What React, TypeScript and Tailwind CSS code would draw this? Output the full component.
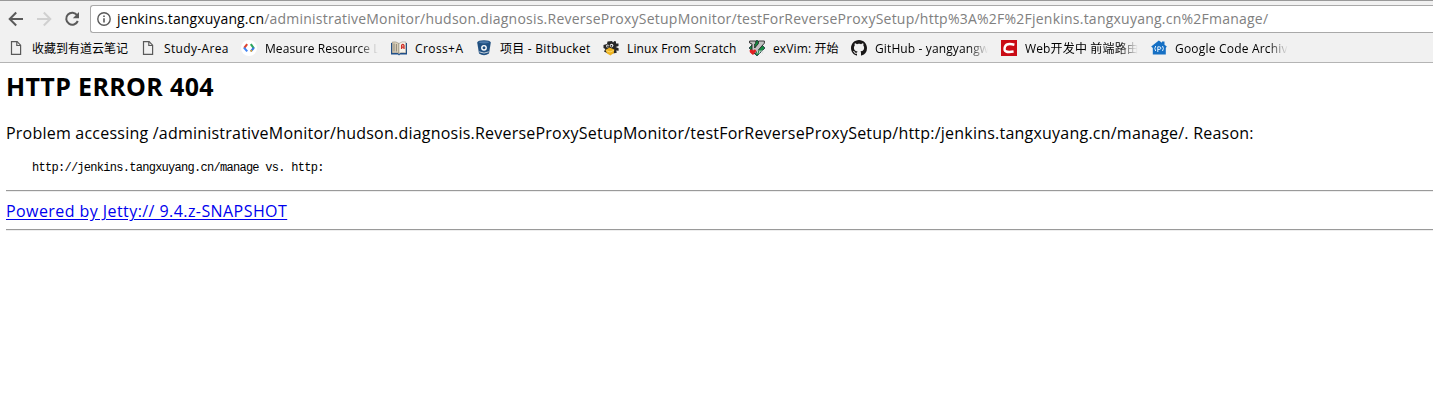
import React from 'react';

type Bookmark = { label: string; width: string; tracking: string; fade?: boolean; icon: React.ReactNode };

const DocIcon = () => (
  <svg width="16" height="16" viewBox="0 0 16 16" fill="none" stroke="#5a5a5a" strokeWidth="1.2">
    <path d="M3.5 1.6h5.6l3.5 3.6v9.2H3.5z" />
    <path d="M8.8 1.6v3.9h3.8" />
  </svg>
);

const CodeIcon = () => (
  <svg width="16" height="16" viewBox="0 0 16 16" fill="none" strokeWidth="2.1">
    <circle cx="8" cy="8" r="8" fill="#fff" />
    <path d="M6.2 4.2 3.2 8" stroke="#e0442f" />
    <path d="M3 7.6 6.2 11.4" stroke="#4285f4" />
    <path d="M9.8 4.2 12.9 8.3" stroke="#2da55d" />
    <path d="M12.9 7.8 9.8 11.4" stroke="#3b78e0" />
    <path d="M9.6 11.6 10.8 10.2" stroke="#f4a81d" strokeWidth="1.6" />
  </svg>
);

const BookIcon = () => (
  <svg width="16" height="16" viewBox="0 0 16 16">
    <path d="M0 3h1.5v10h5.5l1 1 1-1h5.5V3H16v11.5H9l-1 1-1-1H0z" fill="#1c4f8c" />
    <path d="M1.2 2Q5 1 8 3.5V13.4Q5 11.6 1.2 13z" fill="#d9cfb9" stroke="#6d6558" strokeWidth=".4" />
    <path d="M14.8 2Q11 1 8 3.5V13.4q3-1.8 6.8-.4z" fill="#f6f3ea" stroke="#6d6558" strokeWidth=".4" />
    <path d="M3 3.5v8M5.4 4v7.5" stroke="#8e8779" />
    <path d="M10.6 9V5.4q1.2-2 2.4 0V9M10.6 7.2H13" stroke="#cf3028" strokeWidth="1.3" fill="none" />
  </svg>
);

const BitbucketIcon = () => (
  <svg width="16" height="16" viewBox="0 0 16 16">
    <path d="M1.2 2.5 3 13.6Q8 17 13 13.6l1.8-11.1Q14 .2 8 .2T1.2 2.5z" fill="#205081" />
    <ellipse cx="8" cy="2.3" rx="5" ry="1.1" fill="#4b78a8" />
    <circle cx="8" cy="7.8" r="2.2" fill="#205081" stroke="#fff" strokeWidth="1.4" />
    <path d="M3.2 11.8Q8 14.4 12.8 11.8" stroke="#f1f1f1" strokeWidth=".8" fill="none" />
  </svg>
);

const TuxIcon = () => (
  <svg width="16" height="16" viewBox="0 0 16 16">
    <path d="M.5 5 4 4l.5-2.5L9 1l1 1.6L11.5 1 13 1.6V3.5l2.5 0V6L12.6 7l3 1.2v2.6l-2.4-.4.6 2.4-2.6.4L4 13 1 11.6 2.4 9 .5 8z" fill="#262626" />
    <circle cx="4.6" cy="6" r="1.6" fill="#d9d9d9" />
    <circle cx="8.6" cy="5.6" r="1.8" fill="#e8e8e8" />
    <circle cx="5" cy="6.2" r=".8" fill="#111" />
    <circle cx="8.4" cy="5.9" r=".8" fill="#111" />
    <path d="M2.4 10 6.5 7.6l4.8 2L10.8 13 7.4 15.4 4 13.6z" fill="#eeb320" />
    <path d="M3.2 10.6 7 12l3.8-1.6" stroke="#fbe07a" fill="none" strokeWidth=".9" />
  </svg>
);

const VimIcon = () => (
  <svg width="16" height="16" viewBox="0 0 16 16">
    <path d="M8 0l8 8-8 8-8-8z" fill="#168a42" stroke="#123" strokeWidth=".7" />
    <path d="M.6 1h6.2v2L5.7 4v4L9.4 3.6V1h6v2.2L6.2 13.6H3V4L.6 3z" fill="#c2c2c2" stroke="#151515" strokeWidth=".8" />
    <path d="M.5 10.5q2-2.2 3.6 0 1.8-2 3.2.4L4 15 1 12.6z" fill="#e22020" />
    <path d="M8 13.6l1-3.6m1 3.6 1-3 1 1 1-1 1 1-1 2" stroke="#ddd" fill="none" />
  </svg>
);

const GithubIcon = () => (
  <svg width="16" height="16" viewBox="0 0 16 16" fill="#191717">
    <path d="M8 0C3.58 0 0 3.58 0 8c0 3.54 2.29 6.53 5.47 7.59.4.07.55-.17.55-.38 0-.19-.01-.82-.01-1.49-2.01.37-2.53-.49-2.69-.94-.09-.23-.48-.94-.82-1.13-.28-.15-.68-.52-.01-.53.63-.01 1.08.58 1.23.82.72 1.21 1.87.87 2.33.66.07-.52.28-.87.51-1.07-1.78-.2-3.64-.89-3.64-3.95 0-.87.31-1.59.82-2.15-.08-.2-.36-1.02.08-2.12 0 0 .67-.21 2.2.82.64-.18 1.32-.27 2-.27s1.36.09 2 .27c1.53-1.04 2.2-.82 2.2-.82.44 1.1.16 1.92.08 2.12.51.56.82 1.27.82 2.15 0 3.07-1.87 3.75-3.65 3.95.29.25.54.73.54 1.48 0 1.07-.01 1.93-.01 2.2 0 .21.15.46.55.38A8 8 0 0 0 16 8c0-4.42-3.58-8-8-8z" />
  </svg>
);

const CsdnIcon = () => (
  <svg width="16" height="16" viewBox="0 0 16 16">
    <path d="M0 0h16v16H0z" fill="#ca0c16" />
    <path d="M13.4 4.7Q5.4 2.8 4 6.7T5.2 11.5q2 .9 7.4.1" fill="none" stroke="#fff" strokeWidth="2.5" />
  </svg>
);

const HouseIcon = () => (
  <svg width="16" height="16" viewBox="0 0 16 16">
    <path d="M.2 6.6 7.8.5 11 2.8V1.5h2.5v3.2l2.3 1.9-1 1.4V14.5H1.8V8z" fill="#1670c4" />
    <path d="M4.7 6q-1.8 2.5 0 5M11.5 6q1.8 2.5 0 5M6.8 12V6.8h1.3q1.8 0 1.8 1.3T8.1 9.5H6.8" fill="none" stroke="#e4f2ff" strokeWidth="1" />
  </svg>
);

const bookmarks: Bookmark[] = [
  { label: '收藏到有道云笔记', width: 'w-[132px]', tracking: 'tracking-[0px]', icon: <DocIcon /> },
  { label: 'Study-Area', width: 'w-[101px]', tracking: 'tracking-[0.35px]', icon: <DocIcon /> },
  { label: 'Measure Resource L', width: 'w-[150px]', tracking: 'tracking-[0.08px]', fade: true, icon: <CodeIcon /> },
  { label: 'Cross+A', width: 'w-[85px]', tracking: 'tracking-[0.4px]', icon: <BookIcon /> },
  { label: '项目 - Bitbucket', width: 'w-[127px]', tracking: 'tracking-[0.25px]', icon: <BitbucketIcon /> },
  { label: 'Linux From Scratch', width: 'w-[146px]', tracking: 'tracking-[0.12px]', icon: <TuxIcon /> },
  { label: 'exVim: 开始', width: 'w-[102px]', tracking: 'tracking-[0.12px]', icon: <VimIcon /> },
  { label: 'GitHub - yangyangw', width: 'w-[150px]', tracking: 'tracking-[0.12px]', fade: true, icon: <GithubIcon /> },
  { label: 'Web开发中 前端路由', width: 'w-[150px]', tracking: 'tracking-[0.15px]', fade: true, icon: <CsdnIcon /> },
  { label: 'Google Code Archiv', width: 'w-[150px]', tracking: 'tracking-[0.2px]', fade: true, icon: <HouseIcon /> },
];

const Toolbar = () => (
  <div className="flex h-[28px] items-center">
    <div className="flex w-[90px] shrink-0 items-center gap-3 pl-2">
      <svg width="16" height="16" viewBox="0 0 16 16" fill="none" stroke="#5a5a5a" strokeWidth="2">
        <path d="M15 8H2.5M8.2 1.5 1.7 8l6.5 6.5" />
      </svg>
      <svg width="16" height="16" viewBox="0 0 16 16" fill="none" stroke="#d0d0d0" strokeWidth="2">
        <path d="M1 8h12.5M7.8 1.5 14.3 8l-6.5 6.5" />
      </svg>
      <svg width="16" height="16" viewBox="0 0 16 16" fill="none" stroke="#5a5a5a" strokeWidth="2">
        <path d="M13.2 4.3A6 6 0 1 0 13.8 10" />
        <path d="M15 1v6.2H8.8z" fill="#5a5a5a" stroke="none" />
      </svg>
    </div>
    <div className="flex h-[28px] flex-1 items-center rounded-l-[3px] border border-r-0 border-[#a9a9a9] bg-white pl-[6px]">
      <svg className="shrink-0" width="14" height="14" viewBox="0 0 14 14" fill="none" stroke="#5a5a5a">
        <circle cx="7" cy="7" r="6.2" strokeWidth="1.4" />
        <path d="M7 6.2v4.3M7 3.4v1.6" strokeWidth="1.6" />
      </svg>
      <div className="ml-[6px] flex whitespace-pre text-[14px] leading-[20px]">
        <span className="tracking-[0.12px] text-black">jenkins.tangxuyang.cn</span>
        <span className="tracking-[0.23px] text-[#808080]">/administrativeMonitor/hudson.diagnosis.ReverseProxySetupMonitor/testForReverseProxySetup/http%3A%2F%2Fjenkins.tangxuyang.cn%2Fmanage/</span>
      </div>
    </div>
  </div>
);

const BookmarkBar = () => (
  <div className="flex h-[30px] items-center pl-2 text-[12px] leading-[18px] text-black">
    {bookmarks.map((b) => (
      <div key={b.label} className={`flex shrink-0 items-center gap-2 ${b.width}`}>
        <span className="w-4 shrink-0">{b.icon}</span>
        <span
          className={`shrink-0 pt-[2px] whitespace-pre ${b.tracking} ${b.fade ? 'w-[114px] [mask-image:linear-gradient(to_right,black_82%,transparent_99%)]' : ''}`}
        >
          {b.label}
        </span>
      </div>
    ))}
  </div>
);

export default function App() {
  return (
    <div className="h-[400px] w-full overflow-hidden bg-white font-['Open_Sans','Noto_Sans_CJK_SC',sans-serif]">
      <header className="h-[63px] border-t border-b border-t-[#999] border-b-[#b4b4b4] bg-[#f1f1f1] pt-1">
        <Toolbar />
        <BookmarkBar />
      </header>
      <main className="pl-[6px] text-black">
        <h2 className="pt-[6px] text-[25px] leading-[34px] font-bold tracking-[0.35px]">HTTP ERROR 404</h2>
        <p className="pt-[19px] text-[16px] leading-[22px] tracking-[0.222px] whitespace-pre">Problem accessing /administrativeMonitor/hudson.diagnosis.ReverseProxySetupMonitor/testForReverseProxySetup/http:/jenkins.tangxuyang.cn/manage/. Reason:</p>
        <pre className="pt-[16px] pl-[26px] font-['Liberation_Mono',monospace] text-[12px] leading-[16px] tracking-[-0.72px]">http://jenkins.tangxuyang.cn/manage vs. http:</pre>
        <hr className="mt-[14px] h-[2px] border-t border-b border-t-[#9a9a9a] border-b-[#eee]" />
        <div className="mt-[8px] text-[16px] leading-[22px]">
          <a className="tracking-[0.43px] text-[#0000ee] underline underline-offset-2">Powered by Jetty:// 9.4.z-SNAPSHOT</a>
        </div>
        <hr className="mt-[7px] h-[2px] border-t border-b border-t-[#9a9a9a] border-b-[#eee]" />
      </main>
    </div>
  );
}
